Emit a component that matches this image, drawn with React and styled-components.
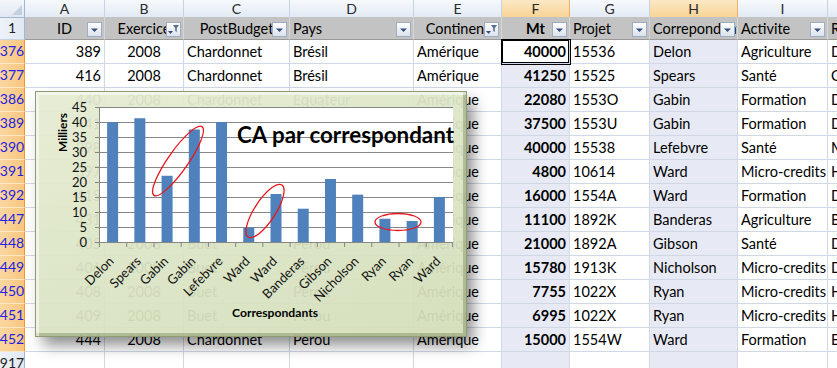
import React from "react";
import styled, { createGlobalStyle } from "styled-components";

const GlobalStyle = createGlobalStyle`
  html, body {
    margin: 0;
    padding: 0;
    background: #fff;
    overflow: hidden;
  }
  body {
    font-family: "Lato", "Liberation Sans", sans-serif;
  }
`;

const TEMPLATE = "25px 80px 79px 106px 124px 88px 68px 80px 88px 90px 120px";
const SELECTED = ["F", "H"];
const LETTERS = ["A", "B", "C", "D", "E", "F", "G", "H", "I", "J"];

const Sheet = styled.div`
  position: relative;
  width: 837px;
  height: 368px;
  overflow: hidden;
  color: #000;
`;

const Row = styled.div`
  display: grid;
  grid-template-columns: ${TEMPLATE};
  height: ${(p) => p.$h}px;
`;

const Corner = styled.div`
  position: relative;
  box-sizing: border-box;
  background: linear-gradient(#f3f6fb, #e1e8f3);
  border-right: 1px solid #9eb6ce;
  border-bottom: 1px solid #9eb6ce;
  &::after {
    content: "";
    position: absolute;
    right: 2px;
    bottom: 2px;
    border-left: 10px solid transparent;
    border-bottom: 10px solid #c4d0e0;
  }
`;

const ColHead = styled.div`
  box-sizing: border-box;
  display: flex;
  align-items: center;
  justify-content: center;
  font-size: 14px;
  color: #2a2a2a;
  background: ${(p) =>
    p.$sel
      ? "linear-gradient(#fce8c4, #f8d497)"
      : "linear-gradient(#f6f9fc, #e3eaf4)"};
  border-right: 1px solid ${(p) => (p.$sel ? "#f2b062" : "#c6d3e2")};
  border-bottom: 1px solid ${(p) => (p.$sel ? "#f29536" : "#9eb6ce")};
`;

const RowHead = styled.div`
  box-sizing: border-box;
  display: flex;
  align-items: flex-end;
  justify-content: center;
  padding-bottom: ${(p) => (p.$top ? 3 : 4)}px;
  font-size: 14px;
  color: ${(p) => (p.$filtered ? "#2222e0" : "#222")};
  background: ${(p) =>
    p.$hot
      ? "linear-gradient(90deg, #fbd7a1, #f8c680)"
      : "linear-gradient(90deg, #eef2f9, #e1e8f3)"};
  border-right: 1px solid ${(p) => (p.$hot ? "#f29536" : "#9eb6ce")};
  border-bottom: 1px solid ${(p) => (p.$hot ? "#fde6c2" : "#c6d3e2")};
`;

const HeadCell = styled.div`
  position: relative;
  box-sizing: border-box;
  display: flex;
  align-items: flex-end;
  justify-content: ${(p) => (p.$center ? "center" : "flex-start")};
  padding: 0 3px 2px;
  font-size: 14.5px;
  font-weight: ${(p) => (p.$bold ? 700 : 400)};
  white-space: nowrap;
  overflow: hidden;
  background: #c3c3c3;
  border-right: 1px solid #d6d6d6;
  border-bottom: 1px solid #9a9a9a;
`;

const FilterBtn = styled.span`
  position: absolute;
  right: 2px;
  top: 5px;
  width: 15px;
  height: 15px;
  box-sizing: border-box;
  border: 1px solid #9fadc2;
  background: linear-gradient(#fdfdfe, #dde3ec);
  display: flex;
  align-items: center;
  justify-content: center;
`;

const Cell = styled.div`
  box-sizing: border-box;
  display: flex;
  align-items: flex-end;
  justify-content: ${(p) =>
    p.$align === "right"
      ? "flex-end"
      : p.$align === "center"
      ? "center"
      : "flex-start"};
  padding: 0 3px 3px;
  font-size: 14.5px;
  font-weight: ${(p) => (p.$bold ? 700 : 400)};
  white-space: nowrap;
  overflow: hidden;
  background: ${(p) => (p.$active ? "#fff" : p.$tint ? "#e7eaf4" : "#fff")};
  border-right: 1px solid #d0d7e5;
  border-bottom: 1px solid #d0d7e5;
  ${(p) =>
    p.$active &&
    "box-shadow: 0 0 0 1px #000, inset 0 0 0 1px #000; position: relative; z-index: 1;"}
`;

const ChartFrame = styled.div`
  position: absolute;
  left: 36px;
  top: 92px;
  width: 430px;
  height: 244px;
  z-index: 2;
  background: linear-gradient(160deg, rgba(229, 236, 210, 0.94), rgba(211, 222, 185, 0.94));
  box-shadow: 0 0 0 1px #8f9b72, 7px 9px 14px rgba(0, 0, 0, 0.45),
    inset 3px 3px 0 rgba(255, 255, 255, 0.5), inset -3px -3px 0 rgba(125, 140, 90, 0.45);
`;

const ChartSvg = styled.svg`
  display: block;
  font-family: "Lato", "Liberation Sans", sans-serif;
`;

const HEADERS = [
  { t: "ID", center: true },
  { t: "Exercice", center: true, filtered: true },
  { t: "PostBudget", center: true },
  { t: "Pays" },
  { t: "Continent", center: true, filtered: true },
  { t: "Mt", center: true, bold: true },
  { t: "Projet" },
  { t: "Correpondant" },
  { t: "Activite" },
  { t: "Region", noBtn: true },
];

const ROWS = [
  [376, 389, "Chardonnet", "Brésil", 40000, "15536", "Delon", "Agriculture", "Dakar"],
  [377, 416, "Chardonnet", "Brésil", 41250, "15525", "Spears", "Santé", "Conakry"],
  [386, 440, "Chardonnet", "Equateur", 22080, "1553O", "Gabin", "Formation", "Dakar"],
  [389, 441, "Chardonnet", "Equateur", 37500, "1553U", "Gabin", "Formation", "Dakar"],
  [390, 398, "Chardonnet", "Equateur", 40000, "15538", "Lefebvre", "Santé", "Maputo"],
  [391, 397, "Chardonnet", "Equateur", 4800, "10614", "Ward", "Micro-credits", "Harare"],
  [392, 415, "Chardonnet", "Equateur", 16000, "1554A", "Ward", "Formation", "Dakar"],
  [447, 431, "Buet", "Pérou", 11100, "1892K", "Banderas", "Agriculture", "Bamako"],
  [448, 405, "Buet", "Pérou", 21000, "1892A", "Gibson", "Santé", "Dakar"],
  [449, 406, "Buet", "Pérou", 15780, "1913K", "Nicholson", "Micro-credits", "Dakar"],
  [450, 408, "Buet", "Pérou", 7755, "1022X", "Ryan", "Micro-credits", "Harare"],
  [451, 409, "Buet", "Pérou", 6995, "1022X", "Ryan", "Micro-credits", "Harare"],
  [452, 444, "Chardonnet", "Pérou", 15000, "1554W", "Ward", "Formation", "Entebbe"],
];

function ArrowIcon({ filtered }) {
  if (filtered) {
    return (
      <svg width="13" height="13" viewBox="0 0 13 13">
        <polygon points="1,8 6,8 3.5,11" fill="#33507e" />
        <polygon points="6,2 12,2 9.8,5 9.8,9 8.2,8 8.2,5" fill="#5b6f90" />
      </svg>
    );
  }
  return (
    <svg width="13" height="13" viewBox="0 0 13 13">
      <polygon points="3,5.5 10,5.5 6.5,9" fill="#33507e" />
    </svg>
  );
}

const PL = 63;
const PR = 417;
const PT = 15;
const PB = 150;
const U = 3;
const CW = (PR - PL) / 13;

function Chart() {
  const data = ROWS.map((r) => ({ name: r[6], v: r[4] / 1000 }));
  const ticks = [0, 5, 10, 15, 20, 25, 30, 35, 40, 45];
  return (
    <ChartFrame>
      <ChartSvg width="430" height="244" viewBox="0 0 430 244">
        <rect x={PL} y={PT} width={PR - PL} height={PB - PT} fill="#fff" />
        {ticks.map((v) => (
          <g key={v}>
            <line x1={PL} x2={PR} y1={PB - v * U + 0.5} y2={PB - v * U + 0.5} stroke="#878787" />
            <line x1={PL - 4} x2={PL} y1={PB - v * U + 0.5} y2={PB - v * U + 0.5} stroke="#878787" />
            <text x={51} y={PB - v * U + 5} textAnchor="end" fontSize="13" fill="#111">
              {v}
            </text>
          </g>
        ))}
        <line x1={PL + 0.5} x2={PL + 0.5} y1={PT} y2={PB} stroke="#878787" />
        {data.map((d, i) => (
          <line
            key={"t" + i}
            x1={PL + i * CW + 0.5}
            x2={PL + i * CW + 0.5}
            y1={PB}
            y2={PB + 5}
            stroke="#878787"
          />
        ))}
        <line x1={PR - 0.5} x2={PR - 0.5} y1={PB} y2={PB + 5} stroke="#878787" />
        {data.map((d, i) => (
          <rect
            key={"b" + i}
            x={PL + (i + 0.5) * CW - 5.5}
            y={PB - d.v * U}
            width="11"
            height={d.v * U}
            fill="#4f81bd"
          />
        ))}
        {data.map((d, i) => (
          <text
            key={"l" + i}
            transform={`translate(${PL + (i + 0.5) * CW + 2} ${PB + 20}) rotate(-45)`}
            textAnchor="end"
            fontSize="13"
            fill="#111"
          >
            {d.name}
          </text>
        ))}
        <text
          transform="translate(31 40.5) rotate(-90)"
          textAnchor="middle"
          fontSize="11.5"
          fontWeight="700"
          textLength="39"
          lengthAdjust="spacingAndGlyphs"
        >
          Milliers
        </text>
        <text
          x="239"
          y="225"
          textAnchor="middle"
          fontSize="12"
          fontWeight="700"
          textLength="86"
          lengthAdjust="spacingAndGlyphs"
        >
          Correspondants
        </text>
        <text
          x="201"
          y="51"
          fontSize="22"
          fontWeight="700"
          textLength="217"
          lengthAdjust="spacingAndGlyphs"
        >
          CA par correspondant
        </text>
        <g fill="none" stroke="#e8161b" strokeWidth="1.3">
          <ellipse cx="142" cy="69" rx="42" ry="10" transform="rotate(-55 142 69)" />
          <ellipse cx="229" cy="119" rx="31" ry="10.5" transform="rotate(-57 229 119)" />
          <ellipse cx="362" cy="130" rx="23" ry="8.5" />
        </g>
      </ChartSvg>
    </ChartFrame>
  );
}

export default function App() {
  return (
    <>
      <GlobalStyle />
      <Sheet>
        <Row $h={17}>
          <Corner />
          {LETTERS.map((l) => (
            <ColHead key={l} $sel={SELECTED.includes(l)}>
              {l}
            </ColHead>
          ))}
        </Row>
        <Row $h={23}>
          <RowHead $top>1</RowHead>
          {HEADERS.map((h) => (
            <HeadCell key={h.t} $center={h.center} $bold={h.bold}>
              {h.t}
              {!h.noBtn && (
                <FilterBtn>
                  <ArrowIcon filtered={h.filtered} />
                </FilterBtn>
              )}
            </HeadCell>
          ))}
        </Row>
        {ROWS.map((r) => (
          <Row $h={24} key={r[0]}>
            <RowHead $hot $filtered>
              {r[0]}
            </RowHead>
            <Cell $align="right">{r[1]}</Cell>
            <Cell $align="center">2008</Cell>
            <Cell>{r[2]}</Cell>
            <Cell>{r[3]}</Cell>
            <Cell>Amérique</Cell>
            <Cell $align="right" $bold $tint $active={r[0] === 376}>
              {r[4]}
            </Cell>
            <Cell>{r[5]}</Cell>
            <Cell $tint>{r[6]}</Cell>
            <Cell>{r[7]}</Cell>
            <Cell>{r[8]}</Cell>
          </Row>
        ))}
        <Row $h={24}>
          <RowHead>917</RowHead>
          {LETTERS.map((l) => (
            <Cell key={l} $tint={SELECTED.includes(l)} />
          ))}
        </Row>
        <Chart />
      </Sheet>
    </>
  );
}
